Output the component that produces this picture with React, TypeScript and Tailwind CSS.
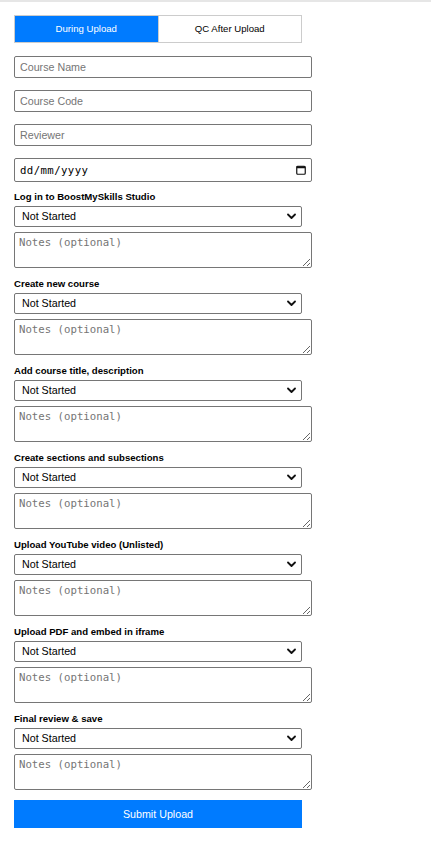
import { useState } from "react";

const steps = [
  "Log in to BoostMySkills Studio",
  "Create new course",
  "Add course title, description",
  "Create sections and subsections",
  "Upload YouTube video (Unlisted)",
  "Upload PDF and embed in iframe",
  "Final review & save",
];

const inputCls =
  "block w-[298px] h-[22px] box-border border border-[#767676] rounded-[2px] px-[5px] text-[10.7px] text-black placeholder:text-[#757575] outline-none";

export default function App() {
  const [tab, setTab] = useState<"during" | "qc">("during");

  return (
    <div className="min-h-screen bg-white border-t-2 border-[#e6e6e6] font-['Liberation_Sans',Arial,sans-serif] text-black">
      <div className="pt-[13px] pl-[14px] pb-[37px] flex flex-col">
        {/* tabs */}
        <div className="flex w-[288px] h-[28px] border border-[#cccccc] box-border">
          <button
            onClick={() => setTab("during")}
            className={
              tab === "during"
                ? "flex-1 bg-[#007bff] text-white text-[9.6px]"
                : "flex-1 bg-white text-black text-[9.6px]"
            }
          >
            During Upload
          </button>
          <button
            onClick={() => setTab("qc")}
            className={
              tab === "qc"
                ? "flex-1 bg-[#007bff] text-white text-[9.6px] border-l border-[#cccccc]"
                : "flex-1 bg-white text-black text-[9.6px] border-l border-[#cccccc]"
            }
          >
            QC After Upload
          </button>
        </div>

        <div className="mt-[13px] flex flex-col gap-[12px]">
          <input className={inputCls} placeholder="Course Name" />
          <input className={inputCls} placeholder="Course Code" />
          <input className={inputCls} placeholder="Reviewer" />
          <div className="relative w-[298px]">
            <input
              className="block w-[298px] h-[24px] box-border border border-[#767676] rounded-[2px] px-[5px] font-['DejaVu_Sans_Mono',monospace] text-[10.7px] tracking-[0.4px] text-black placeholder:text-black outline-none"
              placeholder="dd/mm/yyyy"
            />
            <svg
              className="absolute right-[6px] top-[7px] pointer-events-none"
              width="10"
              height="10"
              viewBox="0 0 10 10"
              fill="none"
            >
              <rect x="0.75" y="1.25" width="8.5" height="8" rx="1" stroke="#111" strokeWidth="1.2" />
              <rect x="0.75" y="1.25" width="8.5" height="2" fill="#111" />
            </svg>
          </div>
        </div>

        {steps.map((s, i) => (
          <div key={s} className={i === 0 ? "mt-[8px] flex flex-col" : "mt-[9px] flex flex-col"}>
            <label className="block h-[12px] leading-[14px] text-[9.6px] font-bold">{s}</label>
            <div className="relative mt-[4px] w-[288px]">
              <select className="block w-[288px] h-[21px] box-border appearance-none border border-[#767676] rounded-[2px] pl-[7px] text-[10.7px] text-black bg-white outline-none">
                <option>Not Started</option>
                <option>In Progress</option>
                <option>Completed</option>
              </select>
              <svg
                className="absolute right-[6px] top-[7px] pointer-events-none"
                width="9"
                height="7"
                viewBox="0 0 9 7"
                fill="none"
              >
                <path d="M1 1.5 L4.5 5 L8 1.5" stroke="#111" strokeWidth="1.8" strokeLinecap="round" strokeLinejoin="round" />
              </svg>
            </div>
            <textarea
              className="block mt-[5px] w-[298px] h-[36px] box-border border border-[#767676] rounded-[2px] px-[4px] pt-[3px] pb-[2px] font-['DejaVu_Sans_Mono',monospace] text-[10.7px] leading-[14px] text-black placeholder:text-[#757575] outline-none resize"
              placeholder="Notes (optional)"
            />
          </div>
        ))}

        <button className="mt-[10px] w-[288px] h-[28px] bg-[#007bff] text-white text-[10.7px]">
          Submit Upload
        </button>
      </div>
    </div>
  );
}
